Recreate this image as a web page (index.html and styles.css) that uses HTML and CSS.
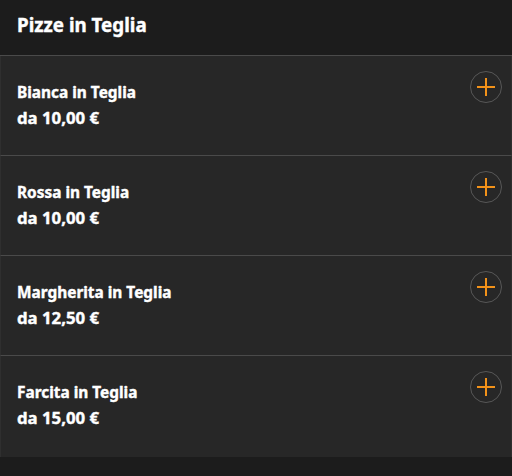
FILE: index.html
```html
<!DOCTYPE html>
<html>
<head>
<meta charset="utf-8">
<link rel="stylesheet" href="styles.css">
</head>
<body>
<div class="page">
  <div class="header">Pizze in Teglia</div>
  <div class="list">
    <div class="item">
      <div class="info"><div class="name">Bianca in Teglia</div><div class="price">da 10,00 €</div></div>
      <div class="add"><svg viewBox="0 0 20 20" width="20" height="20"><path d="M10 1V19M1 10H19" stroke="#f39219" stroke-width="2" fill="none"/></svg></div>
    </div>
    <div class="item">
      <div class="info"><div class="name">Rossa in Teglia</div><div class="price">da 10,00 €</div></div>
      <div class="add"><svg viewBox="0 0 20 20" width="20" height="20"><path d="M10 1V19M1 10H19" stroke="#f39219" stroke-width="2" fill="none"/></svg></div>
    </div>
    <div class="item">
      <div class="info"><div class="name">Margherita in Teglia</div><div class="price">da 12,50 €</div></div>
      <div class="add"><svg viewBox="0 0 20 20" width="20" height="20"><path d="M10 1V19M1 10H19" stroke="#f39219" stroke-width="2" fill="none"/></svg></div>
    </div>
    <div class="item">
      <div class="info"><div class="name">Farcita in Teglia</div><div class="price">da 15,00 €</div></div>
      <div class="add"><svg viewBox="0 0 20 20" width="20" height="20"><path d="M10 1V19M1 10H19" stroke="#f39219" stroke-width="2" fill="none"/></svg></div>
    </div>
  </div>
</div>
</body>
</html>
```
FILE: styles.css
```css
html, body {
  margin: 0;
  padding: 0;
  background: #1c1c1c;
}
.page {
  width: 512px;
  height: 476px;
  overflow: hidden;
  font-family: "Noto Sans", Lato, sans-serif;
  color: #ffffff;
  -webkit-text-stroke: 0.4px #ffffff;
}
.header {
  height: 56px;
  box-sizing: border-box;
  padding: 11px 17px 0;
  font-size: 18.8px;
  font-weight: 700;
  line-height: 28px;
  background: #1c1c1c;
  border-bottom: 1px solid #4a4a4a;
}
.list {
  display: flex;
  flex-direction: column;
}
.item {
  height: 100px;
  box-sizing: border-box;
  display: flex;
  justify-content: space-between;
  align-items: flex-start;
  background: #272727;
  border-left: 1px solid #2f2f2f;
  border-right: 1px solid #2f2f2f;
  border-bottom: 1px solid #4a4a4a;
  padding: 0 9px 0 16px;
}
.item:last-child {
  border-bottom: none;
  height: 101px;
}
.info {
  padding-top: 24px;
  font-weight: 700;
  font-size: 15.4px;
  line-height: 25px;
}
.price {
  font-size: 16.8px;
  line-height: 26px;
}
.add {
  margin-top: 15px;
  width: 32px;
  height: 32px;
  box-sizing: border-box;
  border: 1px solid #575757;
  border-radius: 50%;
  display: flex;
  align-items: center;
  justify-content: center;
}
.add svg {
  display: block;
}
```
